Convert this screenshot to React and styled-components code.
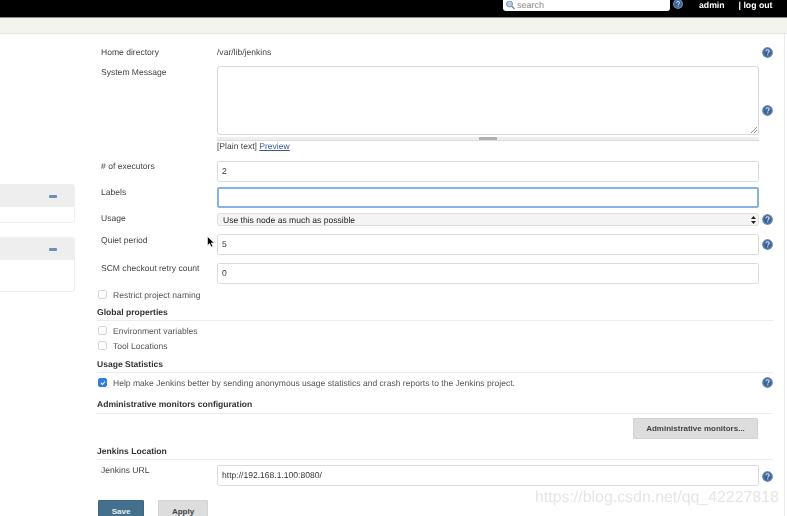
import React from "react";
import styled, { createGlobalStyle } from "styled-components";

const GlobalStyle = createGlobalStyle`
  html, body {
    margin: 0;
    padding: 0;
    background: #fff;
    overflow: hidden;
  }
  body {
    font-family: "Liberation Sans", Arial, sans-serif;
    font-size: 8.55px;
    color: #333;
    text-rendering: geometricPrecision;
  }
`;

const Page = styled.div`
  position: relative;
  width: 787px;
  height: 516px;
  overflow: hidden;
  filter: blur(0.45px);
`;

const Header = styled.header`
  height: 17px;
  background: #000;
  border-bottom: 1px solid #8a8a84;
  display: flex;
  align-items: flex-start;
  box-sizing: content-box;
`;

const SearchBox = styled.div`
  margin-left: 503px;
  width: 167px;
  height: 11px;
  background: #fff;
  border-radius: 0 0 3px 3px;
  display: flex;
  align-items: center;
  gap: 1px;
  padding-left: 2px;
  box-sizing: border-box;
  color: #8c8c8c;
  font-size: 9px;
  line-height: 9px;
`;

const HeaderHelp = styled.div`
  margin: -1px 0 0 3px;
  display: flex;
`;

const HeaderLink = styled.span`
  color: #fff;
  font-weight: bold;
  font-size: 8.7px;
  line-height: 10px;
  margin-left: ${(p) => p.$left}px;
`;

const Breadcrumb = styled.div`
  height: 15px;
  background: #f3f5ec;
  border-bottom: 1px solid #e6e6e0;
`;

const Main = styled.main`
  display: flex;
  width: 784px;
  height: 482px;
  border-right: 1px solid #ececec;
`;

const Sidebar = styled.aside`
  width: 97px;
  flex: none;
  padding-top: 150px;
  display: flex;
  flex-direction: column;
  gap: 14px;
  box-sizing: border-box;
`;

const Panel = styled.div`
  width: 75px;
  height: ${(p) => p.$height}px;
  box-sizing: border-box;
  border: 1px solid #efefef;
  border-left: 0;
  border-radius: 0 3px 3px 0;
`;

const PanelHead = styled.div`
  height: 22px;
  background: #eeeeee;
  display: flex;
  align-items: center;
  justify-content: flex-end;
  padding-right: 17px;
`;

const Minus = styled.span`
  width: 8px;
  height: 3px;
  border-radius: 1px;
  background: #6f8fb8;
`;

const Form = styled.div`
  width: 676px;
  flex: none;
  padding-top: 13px;
  box-sizing: border-box;
`;

const Row = styled.div`
  display: grid;
  grid-template-columns: 120px 542px 14px;
  align-items: ${(p) => p.$align || "start"};
  margin-top: ${(p) => p.$top || 0}px;
`;

const Label = styled.label`
  padding-left: 4px;
  line-height: 11px;
  padding-top: ${(p) => p.$pad || 0}px;
  color: #444;
`;

const Value = styled.div`
  line-height: 11px;
  color: #444;
`;

const Help = styled.span`
  display: flex;
  padding-left: 3px;
  margin-top: ${(p) => p.$top || 0}px;
`;

const TextArea = styled.div`
  width: 542px;
  height: 69px;
  box-sizing: border-box;
  border: 1px solid #d8d8d8;
  border-radius: 3px;
  position: relative;
`;

const Grip = styled.svg`
  position: absolute;
  right: 0;
  bottom: 0;
`;

const ResizeBar = styled.div`
  width: 542px;
  height: 4px;
  margin-top: 2px;
  background: #eeeeee;
  border-bottom: 1px solid #dcdcdc;
  box-sizing: border-box;
  display: flex;
  justify-content: center;
`;

const ResizeThumb = styled.span`
  width: 18px;
  height: 3px;
  background: #b0b0b0;
`;

const Hint = styled.div`
  line-height: 11px;
  color: #444;
`;

const Link = styled.a`
  color: #3d5a94;
  text-decoration: underline;
`;

const Input = styled.div`
  width: 542px;
  height: 21px;
  box-sizing: border-box;
  border: ${(p) => (p.$focus ? "2px solid #86b3e6" : "1px solid #dcdcdc")};
  border-radius: 2px;
  padding: 0 0 1px ${(p) => (p.$focus ? 3 : 4)}px;
  display: flex;
  align-items: center;
  color: #333;
`;

const Select = styled.div`
  width: 542px;
  height: 13px;
  box-sizing: border-box;
  background: #f4f4f4;
  border: 1px solid #dedede;
  border-radius: 3px;
  padding: 0 2px 0 5px;
  display: flex;
  align-items: center;
  justify-content: space-between;
  color: #222;
`;

const CheckRow = styled.div`
  display: flex;
  align-items: center;
  gap: 6px;
  height: 11px;
  margin-top: ${(p) => p.$top}px;
  padding-left: 1px;
  color: #555;
  position: relative;
`;

const Box = styled.span`
  width: 9px;
  height: 9px;
  box-sizing: border-box;
  border-radius: 2px;
  flex: none;
  display: flex;
  align-items: center;
  justify-content: center;
  border: 1px solid ${(p) => (p.$checked ? "#2f7de1" : "#d6d6d6")};
  background: ${(p) => (p.$checked ? "#2f7de1" : "#fff")};
`;

const RowHelp = styled.span`
  position: absolute;
  left: 665px;
  top: 0;
  display: flex;
`;

const Section = styled.h3`
  margin: ${(p) => p.$top}px 0 0;
  height: 12px;
  font-size: 8.55px;
  line-height: 11px;
  font-weight: bold;
  color: #333;
  border-bottom: 1px solid #ececec;
  box-sizing: content-box;
  padding-bottom: ${(p) => p.$pad || 1}px;
`;

const MonitorRow = styled.div`
  display: flex;
  justify-content: flex-end;
  padding-right: 15px;
  margin-top: 4px;
`;

const GreyButton = styled.button`
  height: ${(p) => p.$height || 21}px;
  width: ${(p) => p.$width}px;
  padding: 0;
  font: bold 8px "Liberation Sans", Arial, sans-serif;
  color: #444;
  background: #dddddd;
  border: 1px solid #d2d2d2;
  border-radius: 1px;
`;

const Actions = styled.div`
  display: flex;
  gap: 14px;
  padding-left: 1px;
  margin-top: 14px;
`;

const SaveButton = styled(GreyButton)`
  background: #44708d;
  border-color: #3b6682;
  color: #e8eef2;
`;

const Watermark = styled.div`
  position: absolute;
  left: 535px;
  top: 488px;
  font-size: 15.9px;
  line-height: 19px;
  color: rgba(190, 190, 190, 0.4);
  white-space: nowrap;
`;

const Cursor = styled.svg`
  position: absolute;
  left: 207px;
  top: 236px;
`;

const HelpIcon = ({ size = 11 }) => (
  <svg width={size} height={size} viewBox="0 0 11 11">
    <circle cx="5.5" cy="5.5" r="5.4" fill="#6f90bb" />
    <circle cx="5.5" cy="5.5" r="4.2" fill="#3f6296" />
    <path
      d="M3.9 4.2c.1-1 .9-1.5 1.7-1.5 1 0 1.6.6 1.6 1.4 0 1.2-1.4 1.2-1.4 2.3"
      fill="none"
      stroke="#dfe7f2"
      strokeWidth="1.1"
    />
    <rect x="5.2" y="7.3" width="1.1" height="1.1" fill="#dfe7f2" />
  </svg>
);

const App = () => {
  return (
    <>
      <GlobalStyle />
      <Page>
        <Header>
          <SearchBox>
            <svg width="11" height="9" viewBox="0 0 11 9">
              <circle cx="4.5" cy="3" r="3" fill="#b9cde6" stroke="#7d97b8" />
              <path d="M6.5 5l3 3" stroke="#7a8ea8" strokeWidth="1.6" />
            </svg>
            search
          </SearchBox>
          <HeaderHelp>
            <HelpIcon size={10} />
          </HeaderHelp>
          <HeaderLink $left={16}>admin</HeaderLink>
          <HeaderLink $left={14}>| log out</HeaderLink>
        </Header>
        <Breadcrumb />
        <Main>
          <Sidebar>
            <Panel $height={39}>
              <PanelHead>
                <Minus />
              </PanelHead>
            </Panel>
            <Panel $height={55}>
              <PanelHead>
                <Minus />
              </PanelHead>
            </Panel>
          </Sidebar>
          <Form>
            <Row $align="center">
              <Label>Home directory</Label>
              <Value>/var/lib/jenkins</Value>
              <Help>
                <HelpIcon />
              </Help>
            </Row>
            <Row $top={8}>
              <Label $pad={1}>System Message</Label>
              <div>
                <TextArea>
                  <Grip width="8" height="8" viewBox="0 0 8 8">
                    <path d="M1 7l6-6M4 7l3-3" stroke="#777" strokeWidth="0.8" />
                  </Grip>
                </TextArea>
                <ResizeBar>
                  <ResizeThumb />
                </ResizeBar>
                <Hint>
                  [Plain text] <Link>Preview</Link>
                </Hint>
              </div>
              <Help $top={39}>
                <HelpIcon />
              </Help>
            </Row>
            <Row $top={9}>
              <Label>{"# of executors"}</Label>
              <Input>2</Input>
            </Row>
            <Row $top={5}>
              <Label>Labels</Label>
              <Input $focus />
            </Row>
            <Row $top={5}>
              <Label>Usage</Label>
              <Select>
                Use this node as much as possible
                <svg width="5" height="8" viewBox="0 0 5 8">
                  <path d="M2.5 0L5 3H0zM2.5 8L0 5h5z" fill="#222" />
                </svg>
              </Select>
              <Help $top={1}>
                <HelpIcon />
              </Help>
            </Row>
            <Row $top={8}>
              <Label $pad={1}>Quiet period</Label>
              <Input>5</Input>
              <Help $top={5}>
                <HelpIcon />
              </Help>
            </Row>
            <Row $top={8}>
              <Label>SCM checkout retry count</Label>
              <Input>0</Input>
            </Row>
            <CheckRow $top={5}>
              <Box />
              Restrict project naming
            </CheckRow>
            <Section $top={7}>Global properties</Section>
            <CheckRow $top={4}>
              <Box />
              Environment variables
            </CheckRow>
            <CheckRow $top={4}>
              <Box />
              Tool Locations
            </CheckRow>
            <Section $top={8}>Usage Statistics</Section>
            <CheckRow $top={4}>
              <Box $checked>
                <svg width="6" height="6" viewBox="0 0 6 6">
                  <path d="M1 3l1.5 1.5L5 1.5" fill="none" stroke="#fff" strokeWidth="1.1" />
                </svg>
              </Box>
              Help make Jenkins better by sending anonymous usage statistics and crash reports to the Jenkins project.
              <RowHelp>
                <HelpIcon />
              </RowHelp>
            </CheckRow>
            <Section $top={11} $pad={2}>Administrative monitors configuration</Section>
            <MonitorRow>
              <GreyButton $width={125}>Administrative monitors...</GreyButton>
            </MonitorRow>
            <Section $top={7}>Jenkins Location</Section>
            <Row $top={5}>
              <Label>Jenkins URL</Label>
              <Input>http://192.168.1.100:8080/</Input>
              <Help $top={6}>
                <HelpIcon />
              </Help>
            </Row>
            <Actions>
              <SaveButton $width={46} $height={22}>Save</SaveButton>
              <GreyButton $width={50} $height={22}>Apply</GreyButton>
            </Actions>
          </Form>
        </Main>
        <Cursor width="9" height="12" viewBox="0 0 9 12">
          <path d="M0.5 0.5v9l2.2-2 1.5 3.5 1.6-.7-1.5-3.4h3z" fill="#000" stroke="#fff" strokeWidth="0.6" />
        </Cursor>
        <Watermark>https://blog.csdn.net/qq_42227818</Watermark>
      </Page>
    </>
  );
};

export default App;
